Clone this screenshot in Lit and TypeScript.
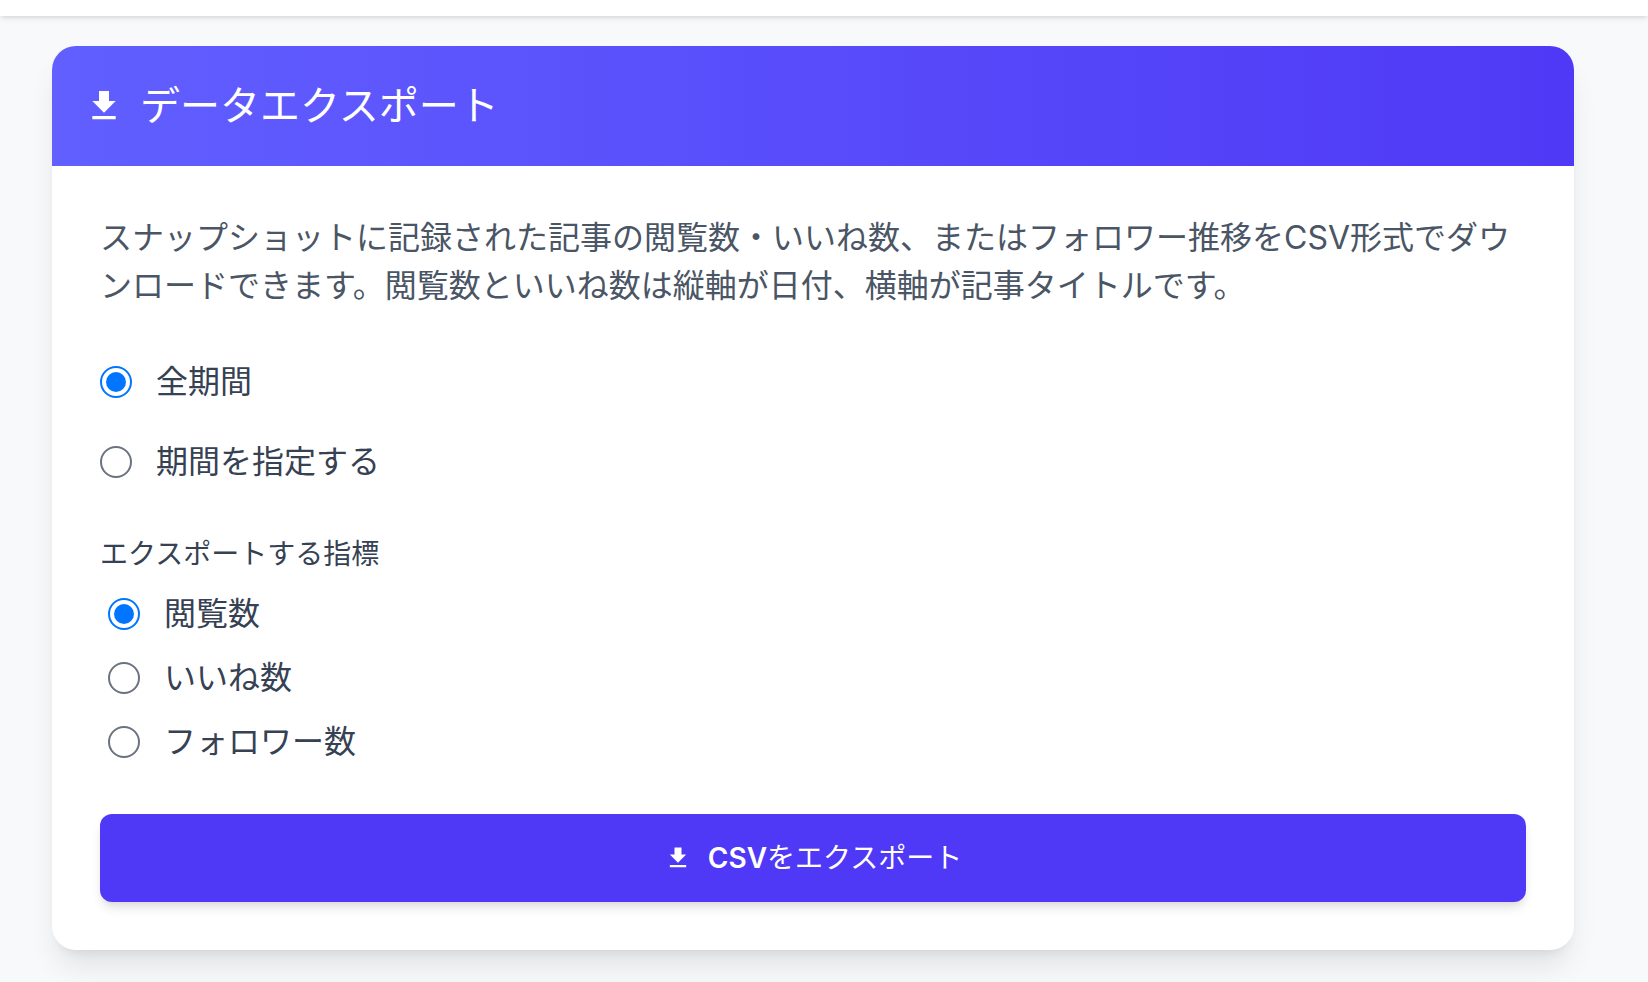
import { LitElement, html, css } from "lit";
import { customElement, state } from "lit/decorators.js";

interface Choice {
  value: string;
  label: string;
}

const PERIODS: Choice[] = [
  { value: "all", label: "全期間" },
  { value: "range", label: "期間を指定する" },
];

const METRICS: Choice[] = [
  { value: "views", label: "閲覧数" },
  { value: "likes", label: "いいね数" },
  { value: "followers", label: "フォロワー数" },
];

const downloadIcon = html`<svg class="icon" viewBox="0 0 24 24" aria-hidden="true">
  <path d="M19 9h-4V3H9v6H5l7 7 7-7zM5 18v2h14v-2H5z" fill="currentColor" />
</svg>`;

@customElement("app-root")
export class AppRoot extends LitElement {
  static styles = css`
    :host {
      display: flex;
      flex-direction: column;
      min-height: 100vh;
      background: #f8f9fb;
      color: #364153;
      font-family: Inter, "Noto Sans CJK JP", sans-serif;
      font-size: 32px;
      line-height: 48px;
    }
    .topbar {
      height: 16px;
      background: #fff;
      box-shadow: 0 2px 6px rgb(0 0 0 / 0.1), 0 2px 4px -2px rgb(0 0 0 / 0.1);
    }
    .page {
      padding: 30px 74px 32px 52px;
    }
    .card {
      overflow: hidden;
      border-radius: 24px;
      background: #fff;
      box-shadow: 0 20px 30px -6px rgb(0 0 0 / 0.1), 0 8px 12px -8px rgb(0 0 0 / 0.1);
    }
    .header {
      display: flex;
      align-items: center;
      gap: 16px;
      padding: 32px;
      background: linear-gradient(to right, #615fff, #4f39f6);
      color: #fff;
    }
    .header .icon {
      width: 40px;
      height: 40px;
    }
    .title {
      margin: 0;
      font-size: 40px;
      font-weight: 400;
      line-height: 56px;
    }
    .icon {
      flex: none;
      display: block;
    }
    .form {
      display: flex;
      flex-direction: column;
      gap: 48px;
      padding: 48px;
    }
    .lead {
      margin: 0;
      color: #4a5565;
    }
    .group {
      display: flex;
      flex-direction: column;
      gap: 32px;
      min-width: 0;
      margin: 0;
      padding: 0;
      border: 0;
    }
    .legend {
      padding: 0;
      margin-bottom: 16px;
      font-size: 28px;
      line-height: 40px;
    }
    .metrics {
      display: flex;
      flex-direction: column;
      gap: 16px;
      padding-left: 8px;
    }
    .choice {
      display: flex;
      align-items: center;
      gap: 24px;
    }
    .radio {
      appearance: none;
      flex: none;
      display: grid;
      place-items: center;
      box-sizing: border-box;
      width: 32px;
      height: 32px;
      margin: 0;
      border: 2px solid #6b7280;
      border-radius: 50%;
      background: #fff;
    }
    .radio:checked {
      border-color: #0075ff;
    }
    .radio:checked::before {
      content: "";
      width: 20px;
      height: 20px;
      border-radius: 50%;
      background: #0075ff;
    }
    .export {
      display: flex;
      align-items: center;
      justify-content: center;
      gap: 16px;
      padding: 24px;
      border: 0;
      border-radius: 12px;
      background: #4f39f6;
      box-shadow: 0 8px 12px -2px rgb(0 0 0 / 0.1), 0 4px 8px -4px rgb(0 0 0 / 0.1);
      color: #fff;
      font-family: inherit;
      font-size: 28px;
      line-height: 40px;
      cursor: pointer;
    }
    .export .icon {
      width: 28px;
      height: 28px;
    }
    .format {
      font-weight: 600;
    }
  `;

  @state() private period = "all";
  @state() private metric = "views";

  private choice(name: string, item: Choice, current: string, pick: (value: string) => void) {
    return html`<label class="choice">
      <input
        class="radio"
        type="radio"
        name=${name}
        .value=${item.value}
        .checked=${item.value === current}
        @change=${() => pick(item.value)}
      />
      <span>${item.label}</span>
    </label>`;
  }

  render() {
    return html`
      <header class="topbar"></header>
      <main class="page">
        <section class="card">
          <div class="header">
            ${downloadIcon}
            <h1 class="title">データエクスポート</h1>
          </div>
          <form class="form" @submit=${(e: Event) => e.preventDefault()}>
            <p class="lead" lang="ja">スナップショットに記録された記事の閲覧数・いいね数、またはフォロワー推移をCSV形式でダウンロードできます。閲覧数といいね数は縦軸が日付、横軸が記事タイトルです。</p>
            <div class="group" role="radiogroup" aria-label="期間">
              ${PERIODS.map((p) => this.choice("period", p, this.period, (v) => (this.period = v)))}
            </div>
            <fieldset class="group">
              <legend class="legend">エクスポートする指標</legend>
              <div class="metrics">
                ${METRICS.map((m) => this.choice("metric", m, this.metric, (v) => (this.metric = v)))}
              </div>
            </fieldset>
            <button class="export" type="submit">${downloadIcon}<span><span class="format">CSV</span>をエクスポート</span></button>
          </form>
        </section>
      </main>
    `;
  }
}
